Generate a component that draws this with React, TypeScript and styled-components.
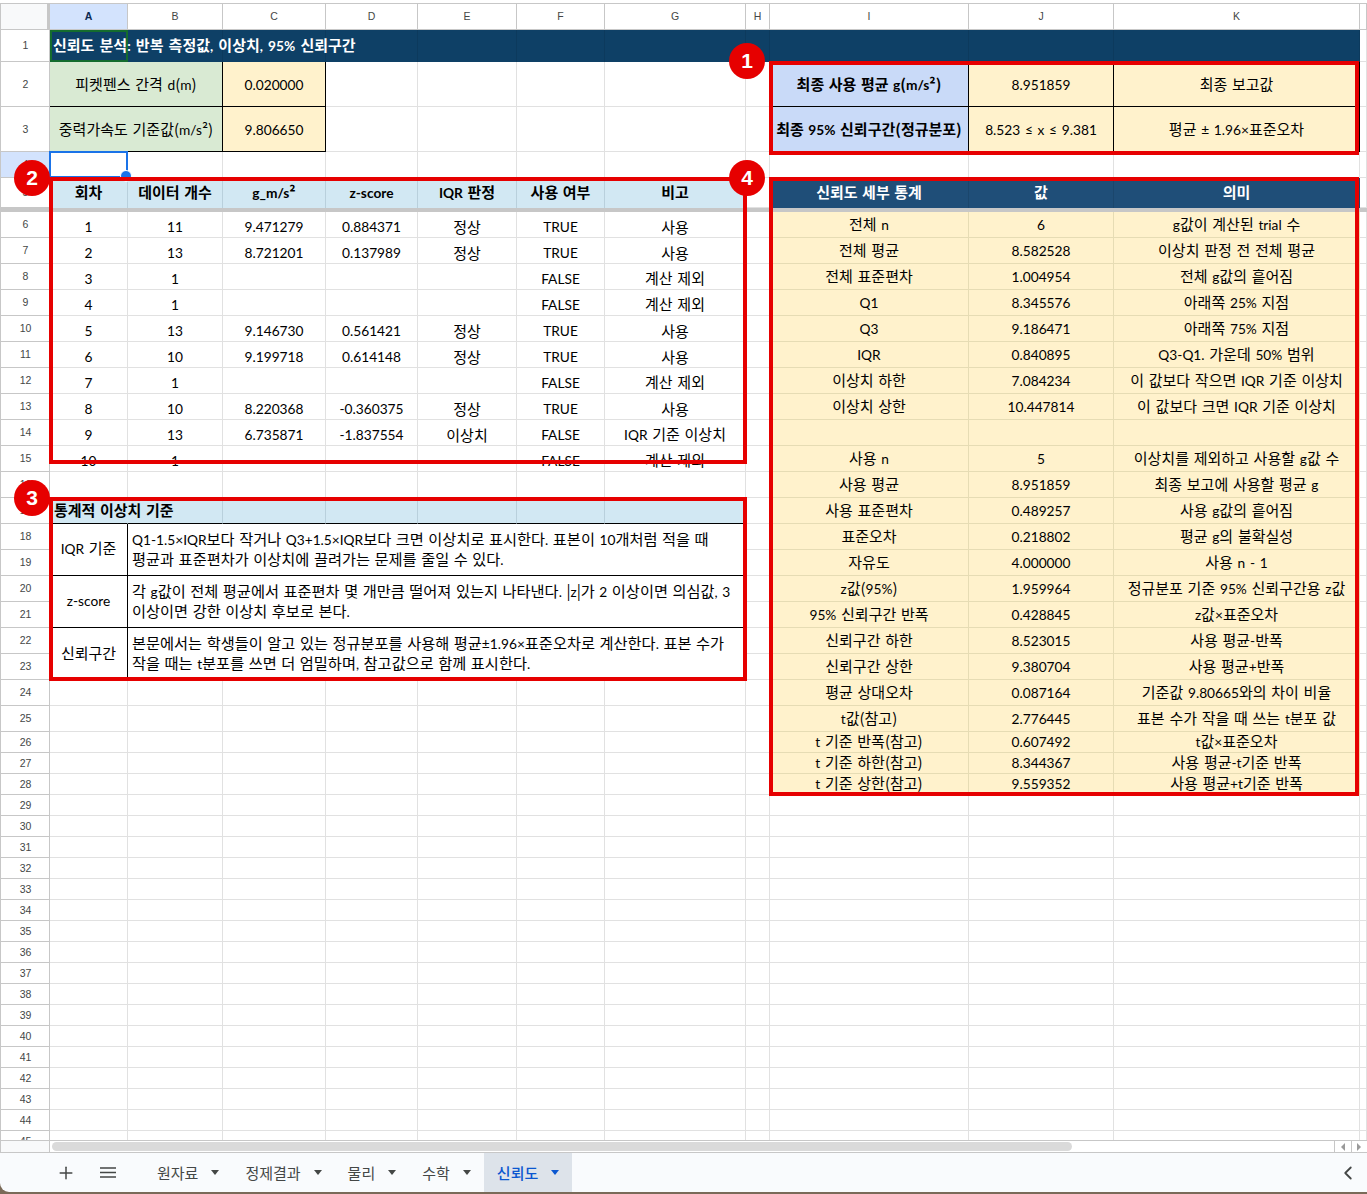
import React from "react";
import styled, { createGlobalStyle, css } from "styled-components";
import { Plus, ChevronLeft } from "lucide-react";

const Global = createGlobalStyle`
  html, body { margin: 0; padding: 0; background: #7a6a58; }
  * { box-sizing: border-box; }
`;

const GRID_LINE = "#e1e1e1";
const HEAD_LINE = "#c7c7c7";

const Frame = styled.div`
  width: 1367px;
  height: 1194px;
  position: relative;
  display: flex;
  flex-direction: column;
  overflow: hidden;
  background: #7a6a58;
  font-family: "Noto Sans CJK KR", "Noto Sans", sans-serif;
  color: #000;
`;

const TopGap = styled.div`
  height: 3px;
  flex: none;
  background: #fff;
`;

const Viewport = styled.div`
  height: 1138px;
  overflow: hidden;
  background: #fff;
  border-top: 1px solid ${HEAD_LINE};
  border-bottom: 1px solid ${HEAD_LINE};
  flex: none;
`;

const Grid = styled.div`
  display: grid;
  grid-template-columns: 50px 78px 95px 103px 92px 99px 88px 141px 24px 199px 145px 246px 7px;
  grid-template-rows: 26px 32px 45px 45px 26px 30px 4px repeat(20, 26px) repeat(20, 21px);
`;

const ColHead = styled.div<{ $active?: boolean }>`
  display: flex;
  align-items: center;
  justify-content: center;
  padding-bottom: 1px;
  font: ${(p) => (p.$active ? "700" : "400")} 10.5px "Liberation Sans", sans-serif;
  color: ${(p) => (p.$active ? "#0b2a52" : "#444746")};
  background: ${(p) => (p.$active ? "#d3e3fd" : "#fff")};
  border-right: 1px solid ${HEAD_LINE};
  border-bottom: 1px solid ${HEAD_LINE};
`;

const Corner = styled.div`
  background: #f8f9fa;
  border-left: 1px solid ${HEAD_LINE};
  border-right: 3px solid ${HEAD_LINE};
  border-bottom: 1px solid ${HEAD_LINE};
`;

const RowHead = styled.div<{ $active?: boolean }>`
  display: flex;
  align-items: center;
  justify-content: center;
  padding: 0 0 1px 1px;
  font: 400 10.5px "Liberation Sans", sans-serif;
  color: #444746;
  background: ${(p) => (p.$active ? "#d3e3fd" : "#fff")};
  border-left: 1px solid ${HEAD_LINE};
  border-right: 1px solid ${HEAD_LINE};
  border-bottom: 1px solid ${HEAD_LINE};
`;

const Blank = styled.div`
  border-right: 1px solid ${GRID_LINE};
  border-bottom: 1px solid ${GRID_LINE};
`;

const Selected = styled(Blank)`
  position: relative;
  z-index: 2;
  margin: -1px 0 0 -1px;
  border: 2px solid #1a73e8;
  &::after {
    content: "";
    position: absolute;
    right: -6px;
    bottom: -6px;
    width: 10px;
    height: 10px;
    border-radius: 50%;
    background: #1a73e8;
    border: 1px solid #fff;
  }
`;

const FreezeBar = styled.div`
  grid-column: 1 / -1;
  background: ${HEAD_LINE};
`;

const Latin = styled.span`
  font-family: Lato, "Noto Sans", sans-serif;
  font-size: 0.915em;
`;

const baseCell = css`
  display: flex;
  align-items: center;
  justify-content: center;
  white-space: nowrap;
  font-size: 15px;
  line-height: 19px;
  word-spacing: 1.2px;
  overflow: hidden;
`;

const TitleFill = styled.div`
  background: #0e4066;
  border-right: 1px solid #0c3a5d;
`;

const TitleCell = styled.div`
  ${baseCell}
  justify-content: flex-start;
  overflow: visible;
  position: relative;
  z-index: 1;
  background: #0e4066;
  color: #fff;
  font-weight: 700;
  word-spacing: 1.8px;
  padding: 0 0 2px 3px;
  box-shadow: inset 0 0 0 2px #146c2e;
`;

const ParamLabel = styled.div`
  ${baseCell}
  grid-column: span 2;
  padding-bottom: 1px;
  background: #d9ead3;
  border-right: 1px solid #000;
  border-bottom: 1px solid #000;
`;

const ParamValue = styled.div`
  ${baseCell}
  padding-bottom: 1px;
  background: #fff2cc;
  border-right: 1px solid #000;
  border-bottom: 1px solid #000;
`;

const SummaryLabel = styled(ParamValue)`
  background: #c9daf8;
  font-weight: 700;
`;

const TableHead = styled.div`
  ${baseCell}
  background: #d2e8f3;
  font-weight: 700;
  padding-bottom: 3px;
  border-right: 1px solid #b9d0dc;
`;

const StatHead = styled.div`
  ${baseCell}
  background: #1f4e78;
  color: #fff;
  font-weight: 700;
  padding-bottom: 3px;
  border-right: 1px solid #1b466c;
`;

const DataCell = styled.div`
  ${baseCell}
  padding-top: 3px;
  border-right: 1px solid ${GRID_LINE};
  border-bottom: 1px solid ${GRID_LINE};
`;

const StatCell = styled.div`
  ${baseCell}
  overflow: visible;
  padding-bottom: 2px;
  background: #fff2cc;
  border-right: 1px solid #e6dcb4;
  border-bottom: 1px solid #e6dcb4;
`;

const NoteHead = styled.div<{ $lead?: boolean }>`
  ${baseCell}
  justify-content: flex-start;
  overflow: visible;
  padding: 0 0 2px 4px;
  background: #d2e8f3;
  font-weight: 700;
  border-right: 1px solid #b9d0dc;
  border-bottom: 1px solid #000;
  ${(p) => p.$lead && "position: relative; z-index: 1; border-right-color: transparent;"}
`;

const NoteLabel = styled.div`
  ${baseCell}
  grid-row: span 2;
  padding-bottom: 3px;
  border-right: 1px solid #000;
  border-bottom: 1px solid #000;
`;

const NoteBody = styled.div`
  ${baseCell}
  grid-column: span 6;
  grid-row: span 2;
  justify-content: flex-start;
  white-space: pre-line;
  padding: 0 0 2px 4px;
  font-size: 15.25px;
  line-height: 18px;
  word-spacing: 1px;
  border-right: 1px solid #000;
  border-bottom: 1px solid #000;
  ${Latin} {
    font-size: 0.9em;
  }
`;

const TextRun = styled.div``;

const Txt = ({ t }: { t: string }) => (
  <TextRun>
    {t.split(/([가-힣|()²]+)/).map((part, i) =>
      /[가-힣|()²]/.test(part) ? <span key={i}>{part}</span> : part ? <Latin key={i}>{part}</Latin> : null
    )}
  </TextRun>
);

const RedBox = styled.div<{ $x: number; $y: number; $w: number; $h: number }>`
  position: absolute;
  left: ${(p) => p.$x}px;
  top: ${(p) => p.$y}px;
  width: ${(p) => p.$w}px;
  height: ${(p) => p.$h}px;
  border: 4px solid #e60000;
  z-index: 5;
  pointer-events: none;
`;

const Badge = styled.div<{ $x: number; $y: number }>`
  position: absolute;
  left: ${(p) => p.$x}px;
  top: ${(p) => p.$y}px;
  width: 36px;
  height: 36px;
  border-radius: 50%;
  background: #e60000;
  color: #fff;
  z-index: 6;
  display: flex;
  align-items: center;
  justify-content: center;
  font: 700 21px "Liberation Sans", sans-serif;
`;

const ScrollRow = styled.div`
  height: 11px;
  flex: none;
  display: flex;
  align-items: center;
  background: #fff;
`;

const ScrollCorner = styled.div`
  width: 50px;
  height: 100%;
  flex: none;
  background: #f8f9fa;
  border-left: 1px solid ${HEAD_LINE};
  border-right: 1px solid ${HEAD_LINE};
`;

const ScrollTrack = styled.div`
  flex: 1;
  padding: 0 0 0 2px;
`;

const ScrollThumb = styled.div`
  width: 1020px;
  height: 9px;
  border-radius: 5px;
  background: #dadada;
`;

const ScrollBtn = styled.div`
  width: 16.5px;
  height: 100%;
  flex: none;
  display: flex;
  align-items: center;
  justify-content: center;
  border-left: 1px solid ${HEAD_LINE};
`;

const Arrow = styled.i<{ $dir: "left" | "right" }>`
  width: 0;
  height: 0;
  border-top: 4px solid transparent;
  border-bottom: 4px solid transparent;
  ${(p) => (p.$dir === "left" ? "border-right: 4px solid #9a9a9a;" : "border-left: 4px solid #9a9a9a;")}
`;

const TabBar = styled.div`
  height: 40px;
  flex: none;
  display: flex;
  align-items: stretch;
  padding-left: 45px;
  background: #f9fbfd;
  border-top: 1px solid ${HEAD_LINE};
  border-radius: 0 0 0 9px;
`;

const IconBtn = styled.div`
  width: 42px;
  display: flex;
  align-items: center;
  justify-content: center;
  color: #444746;
`;

const Tabs = styled.div`
  display: flex;
  margin-left: 15px;
`;

const Tab = styled.div<{ $active?: boolean }>`
  display: flex;
  align-items: center;
  gap: 13px;
  padding: 0 13px;
  font-size: 15px;
  font-weight: ${(p) => (p.$active ? 500 : 400)};
  color: ${(p) => (p.$active ? "#0b57d0" : "#444746")};
  background: ${(p) => (p.$active ? "#dde3ea" : "transparent")};
`;

const Caret = styled.i`
  width: 0;
  height: 0;
  border-left: 4px solid transparent;
  border-right: 4px solid transparent;
  border-top: 5px solid currentColor;
`;

const Spacer = styled.div`
  flex: 1;
`;

const Collapse = styled.div`
  width: 38px;
  display: flex;
  align-items: center;
  justify-content: center;
  color: #444746;
`;

const BottomEdge = styled.div`
  height: 2px;
  flex: none;
`;

const columns = ["A", "B", "C", "D", "E", "F", "G", "H", "I", "J", "K"];

const left: string[][] = [
  ["1", "11", "9.471279", "0.884371", "정상", "TRUE", "사용"],
  ["2", "13", "8.721201", "0.137989", "정상", "TRUE", "사용"],
  ["3", "1", "", "", "", "FALSE", "계산 제외"],
  ["4", "1", "", "", "", "FALSE", "계산 제외"],
  ["5", "13", "9.146730", "0.561421", "정상", "TRUE", "사용"],
  ["6", "10", "9.199718", "0.614148", "정상", "TRUE", "사용"],
  ["7", "1", "", "", "", "FALSE", "계산 제외"],
  ["8", "10", "8.220368", "-0.360375", "정상", "TRUE", "사용"],
  ["9", "13", "6.735871", "-1.837554", "이상치", "FALSE", "IQR 기준 이상치"],
  ["10", "1", "", "", "", "FALSE", "계산 제외"],
];

const stats: string[][] = [
  ["전체 n", "6", "g값이 계산된 trial 수"],
  ["전체 평균", "8.582528", "이상치 판정 전 전체 평균"],
  ["전체 표준편차", "1.004954", "전체 g값의 흩어짐"],
  ["Q1", "8.345576", "아래쪽 25% 지점"],
  ["Q3", "9.186471", "아래쪽 75% 지점"],
  ["IQR", "0.840895", "Q3-Q1. 가운데 50% 범위"],
  ["이상치 하한", "7.084234", "이 값보다 작으면 IQR 기준 이상치"],
  ["이상치 상한", "10.447814", "이 값보다 크면 IQR 기준 이상치"],
  ["", "", ""],
  ["사용 n", "5", "이상치를 제외하고 사용할 g값 수"],
  ["사용 평균", "8.951859", "최종 보고에 사용할 평균 g"],
  ["사용 표준편차", "0.489257", "사용 g값의 흩어짐"],
  ["표준오차", "0.218802", "평균 g의 불확실성"],
  ["자유도", "4.000000", "사용 n - 1"],
  ["z값(95%)", "1.959964", "정규분포 기준 95% 신뢰구간용 z값"],
  ["95% 신뢰구간 반폭", "0.428845", "z값×표준오차"],
  ["신뢰구간 하한", "8.523015", "사용 평균-반폭"],
  ["신뢰구간 상한", "9.380704", "사용 평균+반폭"],
  ["평균 상대오차", "0.087164", "기준값 9.80665와의 차이 비율"],
  ["t값(참고)", "2.776445", "표본 수가 작을 때 쓰는 t분포 값"],
  ["t 기준 반폭(참고)", "0.607492", "t값×표준오차"],
  ["t 기준 하한(참고)", "8.344367", "사용 평균-t기준 반폭"],
  ["t 기준 상한(참고)", "9.559352", "사용 평균+t기준 반폭"],
];

const notes: { row: number; label: string; body: string }[] = [
  {
    row: 18,
    label: "IQR 기준",
    body: "Q1-1.5×IQR보다 작거나 Q3+1.5×IQR보다 크면 이상치로 표시한다. 표본이 10개처럼 적을 때\n평균과 표준편차가 이상치에 끌려가는 문제를 줄일 수 있다.",
  },
  {
    row: 20,
    label: "z-score",
    body: "각 g값이 전체 평균에서 표준편차 몇 개만큼 떨어져 있는지 나타낸다. |z|가 2 이상이면 의심값, 3\n이상이면 강한 이상치 후보로 본다.",
  },
  {
    row: 22,
    label: "신뢰구간",
    body: "본문에서는 학생들이 알고 있는 정규분포를 사용해 평균±1.96×표준오차로 계산한다. 표본 수가\n작을 때는 t분포를 쓰면 더 엄밀하며, 참고값으로 함께 표시한다.",
  },
];

const tabs = ["원자료", "정제결과", "물리", "수학", "신뢰도"];

const blanks = (n: number, prefix: string) =>
  Array.from({ length: n }, (_, i) => <Blank key={`${prefix}-${i}`} />);

const StatCells = ({ row }: { row: number }) => (
  <>
    <Blank />
    {stats[row - 6].map((t, i) => (
      <StatCell key={i}>
        <Txt t={t} />
      </StatCell>
    ))}
    <Blank />
  </>
);

export default function App() {
  const lowerRows: React.ReactNode[] = [];
  for (let r = 29; r <= 45; r++) {
    lowerRows.push(
      <React.Fragment key={r}>
        <RowHead>{r}</RowHead>
        {blanks(12, `r${r}`)}
      </React.Fragment>
    );
  }

  const tailStatRows = [24, 25, 26, 27, 28].map((r) => (
    <React.Fragment key={r}>
      <RowHead>{r}</RowHead>
      {blanks(7, `r${r}`)}
      <StatCells row={r} />
    </React.Fragment>
  ));

  return (
    <Frame>
      <Global />
      <TopGap />
      <Viewport>
        <Grid>
          <Corner />
          {columns.map((c) => (
            <ColHead key={c} $active={c === "A"}>
              {c}
            </ColHead>
          ))}
          <ColHead />

          <RowHead>1</RowHead>
          <TitleCell>
            <Txt t="신뢰도 분석: 반복 측정값, 이상치, 95% 신뢰구간" />
          </TitleCell>
          {Array.from({ length: 10 }, (_, i) => (
            <TitleFill key={i} />
          ))}
          <Blank />

          <RowHead>2</RowHead>
          <ParamLabel>
            <Txt t="피켓펜스 간격 d(m)" />
          </ParamLabel>
          <ParamValue>
            <Txt t="0.020000" />
          </ParamValue>
          {blanks(4, "r2")}
          <Blank />
          <SummaryLabel>
            <Txt t="최종 사용 평균 g(m/s²)" />
          </SummaryLabel>
          <ParamValue>
            <Txt t="8.951859" />
          </ParamValue>
          <ParamValue>
            <Txt t="최종 보고값" />
          </ParamValue>
          <Blank />

          <RowHead>3</RowHead>
          <ParamLabel>
            <Txt t="중력가속도 기준값(m/s²)" />
          </ParamLabel>
          <ParamValue>
            <Txt t="9.806650" />
          </ParamValue>
          {blanks(4, "r3")}
          <Blank />
          <SummaryLabel>
            <Txt t="최종 95% 신뢰구간(정규분포)" />
          </SummaryLabel>
          <ParamValue>
            <Txt t="8.523 ≤ x ≤ 9.381" />
          </ParamValue>
          <ParamValue>
            <Txt t="평균 ± 1.96×표준오차" />
          </ParamValue>
          <Blank />

          <RowHead $active>4</RowHead>
          <Selected />
          {blanks(11, "r4")}

          <RowHead>5</RowHead>
          {["회차", "데이터 개수", "g_m/s²", "z-score", "IQR 판정", "사용 여부", "비고"].map((t) => (
            <TableHead key={t}>
              <Txt t={t} />
            </TableHead>
          ))}
          <Blank />
          {["신뢰도 세부 통계", "값", "의미"].map((t) => (
            <StatHead key={t}>
              <Txt t={t} />
            </StatHead>
          ))}
          <Blank />

          <FreezeBar />

          {left.map((cells, i) => (
            <React.Fragment key={i}>
              <RowHead>{i + 6}</RowHead>
              {cells.map((t, j) => (
                <DataCell key={j}>
                  <Txt t={t} />
                </DataCell>
              ))}
              <StatCells row={i + 6} />
            </React.Fragment>
          ))}

          <RowHead>16</RowHead>
          {blanks(7, "r16")}
          <StatCells row={16} />

          <RowHead>17</RowHead>
          <NoteHead $lead>
            <Txt t="통계적 이상치 기준" />
          </NoteHead>
          {Array.from({ length: 6 }, (_, i) => (
            <NoteHead key={i} />
          ))}
          <StatCells row={17} />

          {notes.map((n) => (
            <React.Fragment key={n.row}>
              <RowHead>{n.row}</RowHead>
              <NoteLabel>
                <Txt t={n.label} />
              </NoteLabel>
              <NoteBody>
                <Txt t={n.body} />
              </NoteBody>
              <StatCells row={n.row} />
              <RowHead>{n.row + 1}</RowHead>
              <StatCells row={n.row + 1} />
            </React.Fragment>
          ))}

          {tailStatRows}
          {lowerRows}
        </Grid>
      </Viewport>

      <ScrollRow>
        <ScrollCorner />
        <ScrollTrack>
          <ScrollThumb />
        </ScrollTrack>
        <ScrollBtn>
          <Arrow $dir="left" />
        </ScrollBtn>
        <ScrollBtn>
          <Arrow $dir="right" />
        </ScrollBtn>
      </ScrollRow>

      <TabBar>
        <IconBtn>
          <Plus size={20} strokeWidth={1.8} />
        </IconBtn>
        <IconBtn>
          <svg width="16" height="11" viewBox="0 0 16 11" fill="none" stroke="currentColor" strokeWidth="1.5">
            <path d="M0 1h16M0 5.5h16M0 10h16" />
          </svg>
        </IconBtn>
        <Tabs>
          {tabs.map((t) => (
            <Tab key={t} $active={t === "신뢰도"}>
              {t}
              <Caret />
            </Tab>
          ))}
        </Tabs>
        <Spacer />
        <Collapse>
          <ChevronLeft size={22} strokeWidth={2} />
        </Collapse>
      </TabBar>
      <BottomEdge />

      <RedBox $x={769} $y={61} $w={590} $h={94} />
      <RedBox $x={49} $y={177} $w={698} $h={287} />
      <RedBox $x={49} $y={497} $w={698} $h={184} />
      <RedBox $x={769} $y={177} $w={590} $h={619} />
      <Badge $x={729} $y={43}>1</Badge>
      <Badge $x={14} $y={160}>2</Badge>
      <Badge $x={14} $y={480}>3</Badge>
      <Badge $x={729} $y={160}>4</Badge>
    </Frame>
  );
}
